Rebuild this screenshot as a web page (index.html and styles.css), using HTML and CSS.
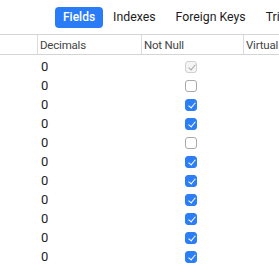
FILE: index.html
```html
<!DOCTYPE html>
<html lang="en">
<head>
  <meta charset="UTF-8" />
  <title>Table Design</title>
  <link rel="stylesheet" href="styles.css">
</head>
<body>
  <div class="toolbar">
    <div class="tab active">Fields</div>
    <div class="tab">Indexes</div>
    <div class="tab">Foreign Keys</div>
    <div class="tab">Triggers</div>
  </div>

  <div class="table">
    <div class="row head">
      <div class="cell"></div>
      <div class="cell">Decimals</div>
      <div class="cell">Not Null</div>
      <div class="cell">Virtual</div>
    </div>

    <div class="body">
      <div class="row"><div class="cell"></div><div class="cell">0</div><div class="cell check"><span class="box on disabled"></span></div><div class="cell"></div></div>
      <div class="row"><div class="cell"></div><div class="cell">0</div><div class="cell check"><span class="box"></span></div><div class="cell"></div></div>
      <div class="row"><div class="cell"></div><div class="cell">0</div><div class="cell check"><span class="box on"></span></div><div class="cell"></div></div>
      <div class="row"><div class="cell"></div><div class="cell">0</div><div class="cell check"><span class="box on"></span></div><div class="cell"></div></div>
      <div class="row"><div class="cell"></div><div class="cell">0</div><div class="cell check"><span class="box"></span></div><div class="cell"></div></div>
      <div class="row"><div class="cell"></div><div class="cell">0</div><div class="cell check"><span class="box on"></span></div><div class="cell"></div></div>
      <div class="row"><div class="cell"></div><div class="cell">0</div><div class="cell check"><span class="box on"></span></div><div class="cell"></div></div>
      <div class="row"><div class="cell"></div><div class="cell">0</div><div class="cell check"><span class="box on"></span></div><div class="cell"></div></div>
      <div class="row"><div class="cell"></div><div class="cell">0</div><div class="cell check"><span class="box on"></span></div><div class="cell"></div></div>
      <div class="row"><div class="cell"></div><div class="cell">0</div><div class="cell check"><span class="box on"></span></div><div class="cell"></div></div>
      <div class="row"><div class="cell"></div><div class="cell">0</div><div class="cell check"><span class="box on"></span></div><div class="cell"></div></div>
    </div>
  </div>
</body>
</html>
```

FILE: styles.css
```css
* { box-sizing: border-box; }

body {
  margin: 0;
  font-family: 'Roboto', 'Liberation Sans', sans-serif;
  background: #ffffff;
  color: #1e1e1e;
  overflow: hidden;
  width: 279px;
  height: 279px;
}

.toolbar {
  height: 35px;
  display: flex;
  align-items: center;
  gap: 0;
  padding-left: 55px;
  border-bottom: 1px solid #d4d4d4;
  white-space: nowrap;
  overflow: hidden;
}

.tab {
  height: 21px;
  padding: 0 10px;
  display: flex;
  align-items: center;
  font-size: 12.3px;
  color: #1c1c1c;
  border-radius: 4px;
  flex-shrink: 0;
}

.tab.active {
  padding: 0 8px;
  background: #2a7cf6;
  color: #ffffff;
  font-size: 12px;
  font-weight: 500;
}

.row {
  display: grid;
  grid-template-columns: 37px 104px 102px 1fr;
  height: 19px;
}

.head {
  height: 20px;
  border-bottom: 1px solid #d4d4d4;
}

.head .cell {
  border-left: 1px solid #dcdcdc;
  font-size: 11.5px;
  letter-spacing: -0.2px;
  color: #444;
  padding-left: 2px;
}

.head .cell:first-child {
  border-left: none;
}

.body {
  padding-top: 2px;
}

.cell {
  display: flex;
  align-items: center;
  padding-left: 4px;
  font-size: 13px;
  overflow: hidden;
  white-space: nowrap;
}

.check {
  justify-content: flex-start;
  padding-left: 44px;
}

.box {
  width: 12px;
  height: 12px;
  border: 1px solid #a9a9a9;
  border-radius: 3px;
  background: #fff;
  position: relative;
}

.box.on {
  background: #2c7ef7;
  border-color: #2c7ef7;
}

.box.on::after {
  content: "";
  position: absolute;
  left: 3.5px;
  top: 1px;
  width: 3px;
  height: 6px;
  border: solid #fff;
  border-width: 0 1.6px 1.6px 0;
  transform: rotate(40deg);
}

.box.on.disabled {
  background: #f4f4f4;
  border-color: #d0d0d0;
}

.box.on.disabled::after {
  border-color: #a8a8a8;
}
```
